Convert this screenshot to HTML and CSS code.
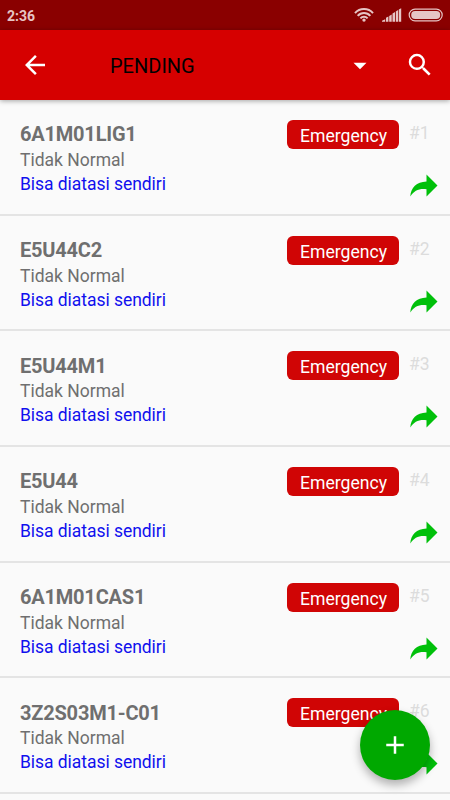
FILE: index.html
```html
<!DOCTYPE html>
<html lang="id">
<head>
<meta charset="utf-8">
<title>Pending</title>
<link rel="stylesheet" href="styles.css">
</head>
<body>
<svg class="defs" width="0" height="0" aria-hidden="true">
  <symbol id="share" viewBox="0 0 28 23"><path d="M16.5 0.5L27.5 11.4L16.5 22.5V15.2C9 14.3 4 16.6 0.3 22.5C0.8 13.5 6.5 8 16.5 7.5Z"/></symbol>
</svg>
<div class="screen">
  <div class="status">
    <span class="time">2:36</span>
    <svg class="indicators" width="90" height="30" viewBox="0 0 90 30">
      <g fill="none" stroke="#e6c5c5" stroke-width="2">
        <path d="M-5 13.1A12 12 0 0 1 13 13.1M-2.3 15.9A8.3 8.3 0 0 1 10.3 15.9M0.4 18.4A4.8 4.8 0 0 1 7.6 18.4"/>
      </g>
      <circle cx="4" cy="20.1" r="1.7" fill="#e6c5c5"/>
      <path fill="#e6c5c5" d="M22 21.8V20.7L25.2 19.3V21.8ZM26 21.8V17.8L28.4 16.6V21.8ZM29.2 21.8V16L31.7 14.6V21.8ZM32.5 21.8V13.4L35 11.9V21.8ZM35.8 21.8V11.4L38.1 10V21.8ZM38.8 21.8V9.6L41.2 8.3V21.8Z"/>
      <rect x="49.2" y="9.2" width="33" height="11.6" rx="5.8" fill="none" stroke="#e6c5c5" stroke-width="1.2"/>
      <rect x="51.2" y="11.1" width="29" height="7.8" rx="3.9" fill="#e6c5c5"/>
    </svg>
  </div>
  <header class="appbar">
    <svg class="back" width="30" height="30" viewBox="0 0 24 24"><path d="M20 11H7.83l5.59-5.59L12 4l-8 8 8 8 1.41-1.41L7.83 13H20z"/></svg>
    <span class="heading">PENDING</span>
    <svg class="caret" width="14" height="8" viewBox="0 0 14 8"><path d="M0.5 0.7H13.5L7 7.2Z"/></svg>
    <svg class="search" width="30" height="30" viewBox="0 0 24 24"><path d="M15.5 14h-.79l-.28-.27A6.47 6.47 0 0 0 16 9.5 6.5 6.5 0 1 0 9.5 16c1.61 0 3.09-.59 4.23-1.57l.27.28v.79l5 4.99L20.49 19zm-6 0C7.01 14 5 11.99 5 9.5S7.01 5 9.5 5 14 7.01 14 9.5 11.99 14 9.5 14z"/></svg>
  </header>
  <main class="list">
    <article class="row"><div class="info"><h2>6A1M01LIG1</h2><p>Tidak Normal</p><p class="note">Bisa diatasi sendiri</p></div><span class="badge">Emergency</span><div class="side"><span class="num">#1</span><svg class="share" width="28" height="23"><use href="#share"/></svg></div></article>
    <article class="row"><div class="info"><h2>E5U44C2</h2><p>Tidak Normal</p><p class="note">Bisa diatasi sendiri</p></div><span class="badge">Emergency</span><div class="side"><span class="num">#2</span><svg class="share" width="28" height="23"><use href="#share"/></svg></div></article>
    <article class="row"><div class="info"><h2>E5U44M1</h2><p>Tidak Normal</p><p class="note">Bisa diatasi sendiri</p></div><span class="badge">Emergency</span><div class="side"><span class="num">#3</span><svg class="share" width="28" height="23"><use href="#share"/></svg></div></article>
    <article class="row"><div class="info"><h2>E5U44</h2><p>Tidak Normal</p><p class="note">Bisa diatasi sendiri</p></div><span class="badge">Emergency</span><div class="side"><span class="num">#4</span><svg class="share" width="28" height="23"><use href="#share"/></svg></div></article>
    <article class="row"><div class="info"><h2>6A1M01CAS1</h2><p>Tidak Normal</p><p class="note">Bisa diatasi sendiri</p></div><span class="badge">Emergency</span><div class="side"><span class="num">#5</span><svg class="share" width="28" height="23"><use href="#share"/></svg></div></article>
    <article class="row"><div class="info"><h2>3Z2S03M1-C01</h2><p>Tidak Normal</p><p class="note">Bisa diatasi sendiri</p></div><span class="badge">Emergency</span><div class="side"><span class="num">#6</span><svg class="share" width="28" height="23"><use href="#share"/></svg></div></article>
  </main>
  <button class="fab" aria-label="Tambah"><svg width="30" height="30" viewBox="0 0 24 24"><path d="M19 13h-6v6h-2v-6H5v-2h6V5h2v6h6z"/></svg></button>
</div>
</body>
</html>
```
FILE: styles.css
```css
* { box-sizing: border-box; }
body { margin: 0; font-family: Roboto, "Liberation Sans", sans-serif; background: #fafafa; }
svg { display: block; flex: none; }
.defs { position: absolute; }
.screen { position: relative; width: 450px; height: 800px; overflow: hidden; background: #fafafa; }
.status { height: 30px; display: flex; align-items: center; justify-content: space-between; padding-left: 7px; background: #8a0000; }
.time { font-size: 14px; font-weight: 700; color: #e6c5c5; line-height: 30px; padding-top: 1px; }
.indicators { overflow: visible; }
.appbar { position: relative; height: 70px; display: flex; align-items: center; padding: 0 15px 0 20px; background: #d60000; box-shadow: 0 1px 5px rgba(0, 0, 0, .35); fill: #fff; }
.heading { width: 243px; margin-left: 60px; font-size: 20px; line-height: 24px; padding-top: 1px; color: #000; }
.caret { margin-top: 1px; }
.search { margin-left: 38px; }
.row { display: flex; align-items: flex-start; height: 115.7px; padding: 20px 12px 0 20px; border-bottom: 2px solid #e4e4e4; }
.info { flex: 1; color: #6f6f6f; font-size: 17.5px; line-height: 24px; }
.info h2 { margin: 2.3px 0 1.7px; font-size: 20px; line-height: 24px; font-weight: 700; letter-spacing: -0.2px; }
.info p { margin: 0; }
.info .note { color: #1010ee; letter-spacing: -0.05px; }
.badge { width: 112px; height: 29px; border-radius: 6px; background: #d00505; color: #fff; font-size: 17.6px; line-height: 32px; padding-left: 13px; }
.side { width: 28px; margin-left: 11px; }
.num { display: block; height: 54px; margin-left: -1px; font-size: 17.5px; line-height: 26px; color: #dcdcdc; }
.share { fill: #00c00a; }
.fab { position: absolute; left: 360px; top: 710px; width: 70px; height: 70px; border: 0; border-radius: 50%; padding: 0; display: flex; align-items: center; justify-content: center; background: #00a800; fill: #fff; box-shadow: 0 5px 10px rgba(0, 0, 0, .3); }
```
